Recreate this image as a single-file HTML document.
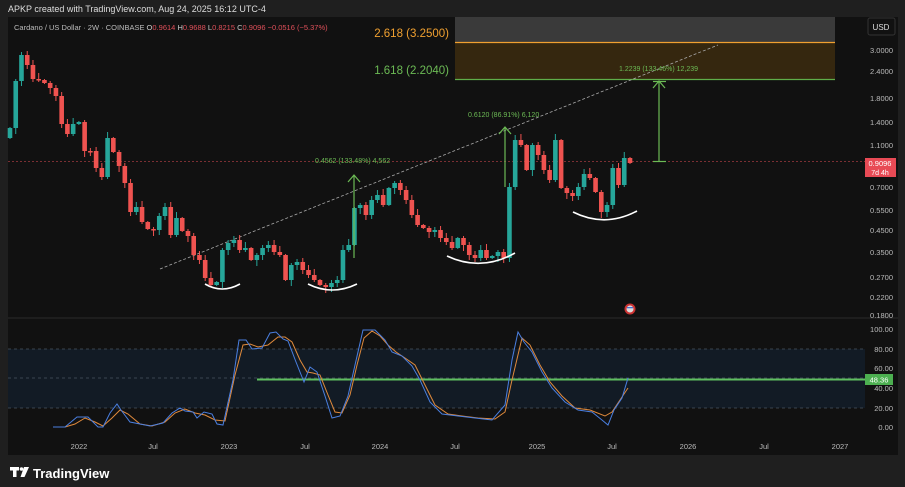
<!DOCTYPE html>
<html><head><meta charset="utf-8"><style>
body{margin:0;width:905px;height:487px;background:#1f1f1f;font-family:"Liberation Sans",sans-serif;overflow:hidden;position:relative}
.t{position:absolute;white-space:nowrap}
</style></head><body>
<div class="t" style="left:8px;top:4px;font-size:9px;color:#ddd">APKP created with TradingView.com, Aug 24, 2025 16:12 UTC-4</div>
<svg width="905" height="487" style="position:absolute;left:0;top:0" xmlns="http://www.w3.org/2000/svg" font-family="Liberation Sans, sans-serif">
<rect x="8" y="17" width="890" height="438" fill="#111111"/>
<line x1="8" y1="318" x2="898" y2="318" stroke="#2a2a2a"/>
<rect x="455" y="17" width="380" height="25" fill="#3a3a3a"/>
<rect x="455" y="42" width="380" height="37" fill="#35270f"/>
<line x1="455" y1="42.5" x2="835" y2="42.5" stroke="#f0a030" stroke-width="1.3"/>
<line x1="455" y1="79.5" x2="835" y2="79.5" stroke="#5fae4a" stroke-width="1.3"/>
<text x="449" y="37" font-size="11.5" fill="#f0a030" text-anchor="end">2.618 (3.2500)</text>
<text x="449" y="74" font-size="11.5" fill="#6cbb55" text-anchor="end">1.618 (2.2040)</text>
<text x="14" y="30" font-size="7.5" fill="#bbb">Cardano / US Dollar · 2W · COINBASE  <tspan fill="#ccc">O</tspan><tspan fill="#e0505a">0.9614</tspan> <tspan fill="#ccc">H</tspan><tspan fill="#e0505a">0.9688</tspan> <tspan fill="#ccc">L</tspan><tspan fill="#e0505a">0.8215</tspan> <tspan fill="#ccc">C</tspan><tspan fill="#e0505a">0.9096  −0.0516 (−5.37%)</tspan></text>
<line x1="8" y1="161.5" x2="865" y2="161.5" stroke="#7a2f33" stroke-dasharray="2,2"/>
<line x1="160" y1="269" x2="718" y2="45" stroke="#aaa" stroke-width="0.8" stroke-dasharray="3,2"/>
<g id="candles"></g>
<g stroke="#6cbb55" stroke-width="1.2" fill="none">
<line x1="354" y1="258" x2="354" y2="175"/><polyline points="348,182 354,175 360,182"/>
<line x1="505" y1="187" x2="505" y2="127"/><polyline points="499,134 505,127 511,134"/>
<line x1="659" y1="161" x2="659" y2="81"/><polyline points="653,88 659,81 665,88"/><line x1="653" y1="161.5" x2="666" y2="161.5"/><line x1="653" y1="81.5" x2="666" y2="81.5"/>
</g>
<g font-size="7" fill="#6cbb55">
<text x="315" y="163">0.4562 (133.48%) 4,562</text>
<text x="468" y="117">0.6120 (86.91%) 6,120</text>
<text x="619" y="71">1.2239 (133.46%) 12,239</text>
</g>
<g stroke="#fff" stroke-width="1.6" fill="none">
<path d="M205,284 Q222,294 240,284"/>
<path d="M308,284 Q332,296 357,284"/>
<path d="M447,256 Q481,272 515,253"/>
<path d="M573,212 Q605,228 637,211"/>
</g>
<circle cx="630" cy="309" r="5.5" fill="#c33" /><circle cx="630" cy="309" r="3.5" fill="#ddd"/><rect x="627" y="307" width="6" height="1.3" fill="#4a6fd0"/>
<rect x="868" y="18" width="27" height="17" rx="2" fill="#111" stroke="#333"/>
<text x="881" y="30" font-size="8" fill="#ddd" text-anchor="middle">USD</text>
<g font-size="7.5" fill="#bbb" text-anchor="end">
<text x="893" y="53">3.0000</text><text x="893" y="74">2.4000</text><text x="893" y="101">1.8000</text><text x="893" y="125">1.4000</text><text x="893" y="148">1.1000</text><text x="893" y="190">0.7000</text><text x="893" y="213">0.5500</text><text x="893" y="233">0.4500</text><text x="893" y="255">0.3500</text><text x="893" y="280">0.2700</text><text x="893" y="300">0.2200</text><text x="893" y="318">0.1800</text>
</g>
<rect x="865" y="158" width="31" height="19" fill="#e84a55"/>
<text x="880" y="166" font-size="7.5" fill="#fff" text-anchor="middle">0.9096</text>
<text x="880" y="175" font-size="7" fill="#fff" text-anchor="middle">7d 4h</text>
<rect x="8" y="349" width="857" height="59" fill="#121b25"/>
<g stroke="#4a5560" stroke-dasharray="3,3" stroke-width="0.8">
<line x1="8" y1="349" x2="865" y2="349"/><line x1="8" y1="378" x2="865" y2="378"/><line x1="8" y1="408" x2="865" y2="408"/>
</g>
<line x1="257" y1="379.5" x2="865" y2="379.5" stroke="#5fbf60" stroke-width="2"/>
<polyline fill="none" stroke="#e08a3c" stroke-width="1" points="65,427 75,424 85,418 95,422 103,426 112,418 120,410 128,414 140,424 152,426 165,422 175,413 185,409 195,413 205,415 215,420 225,421 235,375 243,345 250,344 258,347 268,345 278,337 285,337 292,342 300,360 307,372 313,373 320,375 328,395 335,412 342,413 350,395 357,365 364,338 372,331 380,336 388,345 396,352 405,358 415,365 425,385 435,405 448,414 462,416 478,418 495,419 505,412 512,380 522,338 530,345 540,365 550,382 562,396 575,408 590,410 605,416 612,412 620,400 628,388"/>
<polyline fill="none" stroke="#4a7fe0" stroke-width="1" points="53,427 65,427 77,417 88,417 98,427 103,427 110,413 117,404 121,410 130,422 150,426 163,423 172,413 180,408 185,411 193,412 197,418 204,412 212,414 217,424 223,425 233,380 239,340 246,340 252,349 262,348 270,333 276,332 283,339 288,341 296,362 304,382 310,367 317,372 325,396 332,418 340,416 348,396 355,365 363,330 375,330 385,340 392,352 402,356 412,366 420,380 430,402 442,414 458,416 475,418 492,420 505,405 512,360 518,332 524,342 532,352 542,372 552,388 565,402 578,410 592,412 602,420 608,425 614,410 622,398 628,378"/>
<g font-size="7.5" fill="#bbb" text-anchor="end">
<text x="893" y="332">100.00</text><text x="893" y="352">80.00</text><text x="893" y="371">60.00</text><text x="893" y="411">20.00</text><text x="893" y="430">0.00</text><text x="893" y="391">40.00</text>
</g>
<rect x="865" y="374" width="28" height="11" fill="#4caf50"/>
<text x="879" y="382.5" font-size="7.5" fill="#fff" text-anchor="middle">48.36</text>
<g font-size="7.5" fill="#bbb" text-anchor="middle">
<text x="79" y="449">2022</text><text x="153" y="449">Jul</text><text x="229" y="449">2023</text><text x="305" y="449">Jul</text><text x="380" y="449">2024</text><text x="455" y="449">Jul</text><text x="537" y="449">2025</text><text x="612" y="449">Jul</text><text x="688" y="449">2026</text><text x="764" y="449">Jul</text><text x="840" y="449">2027</text>
</g>
<g fill="#fff"><rect x="10" y="467" width="9" height="3.5"/><rect x="13" y="467" width="3.5" height="10"/><circle cx="21.5" cy="469" r="1.8"/><polygon points="24,467 29,467 24.5,477 20.5,477"/></g>
<text x="33" y="478" font-size="13" font-weight="bold" fill="#fff">TradingView</text>
</svg>
<script>
var c=[128,81,55,65,79,80,83,88,96,124,134,124,122,151,151,168,177,138,152,166,183,212,207,222,229,230,216,207,235,218,231,236,255,260,278,285,282,250,243,240,250,248,260,255,248,245,252,255,280,265,262,270,275,280,285,287,283,280,250,245,208,205,215,200,195,205,188,183,190,200,215,225,228,232,230,238,242,248,238,245,255,258,250,258,256,252,258,187,140,145,170,145,155,170,180,140,188,193,196,187,174,178,192,212,205,168,185,158,163];
var g=document.getElementById('candles'),s='',o=138,n=c.length,st=620/(n-1);
for(var i=0;i<n;i++){var x=10+i*st,cl=c[i],up=cl<o,col=up?'#26a69a':'#ef5350';
var t=Math.min(o,cl),b=Math.max(o,cl),h=Math.max(b-t,1.5);
var w1=t-1-((i*7)%6),w2=b+1+((i*5)%6);
s+='<line x1="'+x+'" y1="'+w1+'" x2="'+x+'" y2="'+w2+'" stroke="'+col+'" stroke-width="1"/>';
s+='<rect x="'+(x-2.3)+'" y="'+t+'" width="4.6" height="'+h+'" fill="'+col+'"/>';o=cl;}
g.innerHTML=s;
</script>
</body></html>
